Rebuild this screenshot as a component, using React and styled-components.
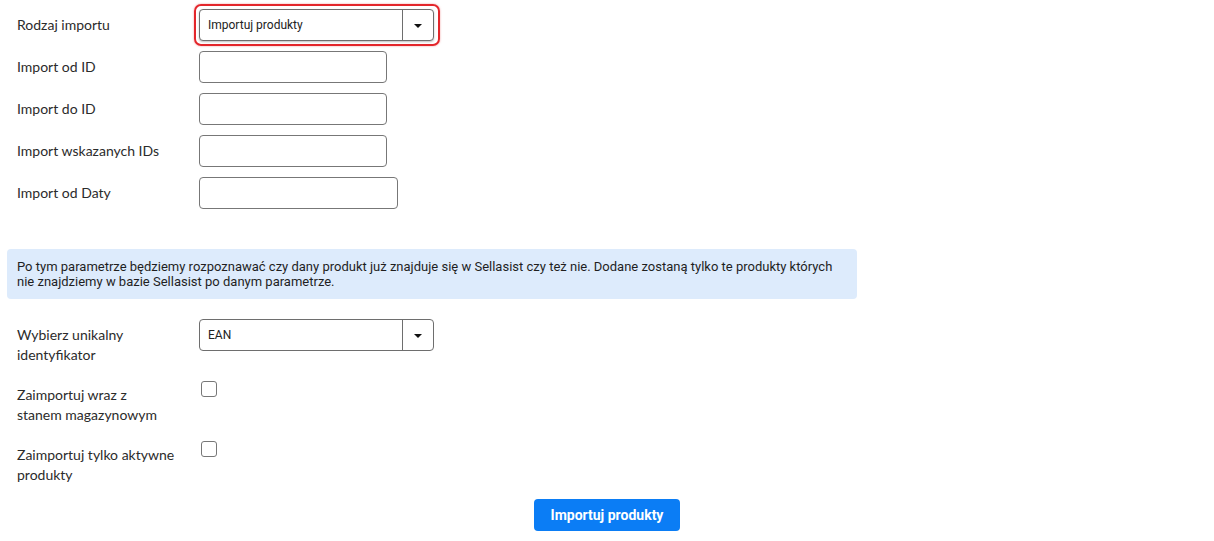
import React from "react";
import styled, { createGlobalStyle } from "styled-components";

const Global = createGlobalStyle`
  html, body { margin: 0; padding: 0; background: #fff; }
  body { font-family: "Lato", "Roboto", sans-serif; color: #2b2b2b; }
  * { box-sizing: border-box; }
`;

const Page = styled.div`
  width: 1214px;
  height: 541px;
  padding: 9px 0 0 7px;
  display: flex;
  flex-direction: column;
`;

const Section = styled.div`
  display: flex;
  flex-direction: column;
  gap: ${(p) => p.$gap}px;
  padding-left: 10px;
`;

const Row = styled.div`
  display: grid;
  grid-template-columns: 182px auto;
  align-items: start;
`;

const Label = styled.div`
  padding-top: 6px;
  font-size: 14px;
  line-height: 20px;
  color: #2b2b2b;
  width: 165px;
`;

const SelectBox = styled.div`
  position: relative;
  width: 235px;
  height: 32px;
  border: 1px solid #6e6e6e;
  border-radius: 4px;
  display: flex;
  align-items: stretch;
  background: #fff;
  box-shadow: ${(p) => (p.$highlight ? "0 1px 2px rgba(0,0,0,0.25)" : "none")};

  ${(p) =>
    p.$highlight &&
    `
    &::after {
      content: "";
      position: absolute;
      left: -6px;
      top: -6px;
      right: -7px;
      bottom: -6px;
      border: 2px solid #e3262b;
      border-radius: 7px;
      box-shadow: 0 0 2px rgba(227, 38, 43, 0.5);
      pointer-events: none;
    }
  `}
`;

const SelectValue = styled.div`
  flex: 1;
  padding-left: 8px;
  display: flex;
  align-items: center;
  font-family: "Roboto", sans-serif;
  font-size: 12px;
  color: #222;
`;

const SelectArrow = styled.div`
  width: 31px;
  border-left: 1px solid #6e6e6e;
  display: flex;
  align-items: center;
  justify-content: center;
`;

const Caret = styled.span`
  width: 0;
  height: 0;
  border-left: 4px solid transparent;
  border-right: 4px solid transparent;
  border-top: 4px solid #111;
  margin-top: 1px;
`;

const Input = styled.input`
  width: ${(p) => p.$w}px;
  height: 32px;
  border: 1px solid #777;
  border-radius: 4px;
  padding: 0 8px;
  font-family: "Roboto", sans-serif;
  font-size: 12px;
  outline: none;
  display: block;
`;

const Info = styled.div`
  margin-top: 40px;
  width: 850px;
  background: #ddebfc;
  border-radius: 4px;
  padding: 10px;
  font-family: "Roboto", sans-serif;
  font-size: 13px;
  line-height: 15px;
  color: #1f1f1f;
  margin-bottom: 20px;
`;

const CheckBox = styled.span`
  display: block;
  width: 16px;
  height: 16px;
  margin: 2px 0 0 2px;
  border: 1px solid #777;
  border-radius: 3px;
  background: #fff;
`;

const ButtonBar = styled.div`
  display: flex;
  justify-content: center;
  margin: 14px 0 0 -7px;
`;

const Button = styled.button`
  width: 146px;
  height: 32px;
  border: none;
  border-radius: 4px;
  background: #0b7df5;
  color: #fff;
  font-family: "Roboto", sans-serif;
  font-weight: 700;
  font-size: 14px;
  cursor: pointer;
`;

const Select = ({ value, highlight }) => (
  <SelectBox $highlight={highlight}>
    <SelectValue>{value}</SelectValue>
    <SelectArrow>
      <Caret />
    </SelectArrow>
  </SelectBox>
);

export default function App() {
  return (
    <Page>
      <Global />
      <Section $gap={10}>
        <Row>
          <Label>Rodzaj importu</Label>
          <Select value="Importuj produkty" highlight />
        </Row>
        <Row>
          <Label>Import od ID</Label>
          <Input $w={188} />
        </Row>
        <Row>
          <Label>Import do ID</Label>
          <Input $w={188} />
        </Row>
        <Row>
          <Label>Import wskazanych IDs</Label>
          <Input $w={188} />
        </Row>
        <Row>
          <Label>Import od Daty</Label>
          <Input $w={199} />
        </Row>
      </Section>
      <Info>
        Po tym parametrze będziemy rozpoznawać czy dany produkt już znajduje się w Sellasist czy też nie. Dodane zostaną tylko te produkty których
        nie znajdziemy w bazie Sellasist po danym parametrze.
      </Info>
      <Section $gap={14}>
        <Row>
          <Label>Wybierz unikalny identyfikator</Label>
          <Select value="EAN" />
        </Row>
        <Row>
          <Label>
            Zaimportuj wraz z<br />
            stanem magazynowym
          </Label>
          <CheckBox />
        </Row>
        <Row>
          <Label>Zaimportuj tylko aktywne produkty</Label>
          <CheckBox />
        </Row>
      </Section>
      <ButtonBar>
        <Button>Importuj produkty</Button>
      </ButtonBar>
    </Page>
  );
}
